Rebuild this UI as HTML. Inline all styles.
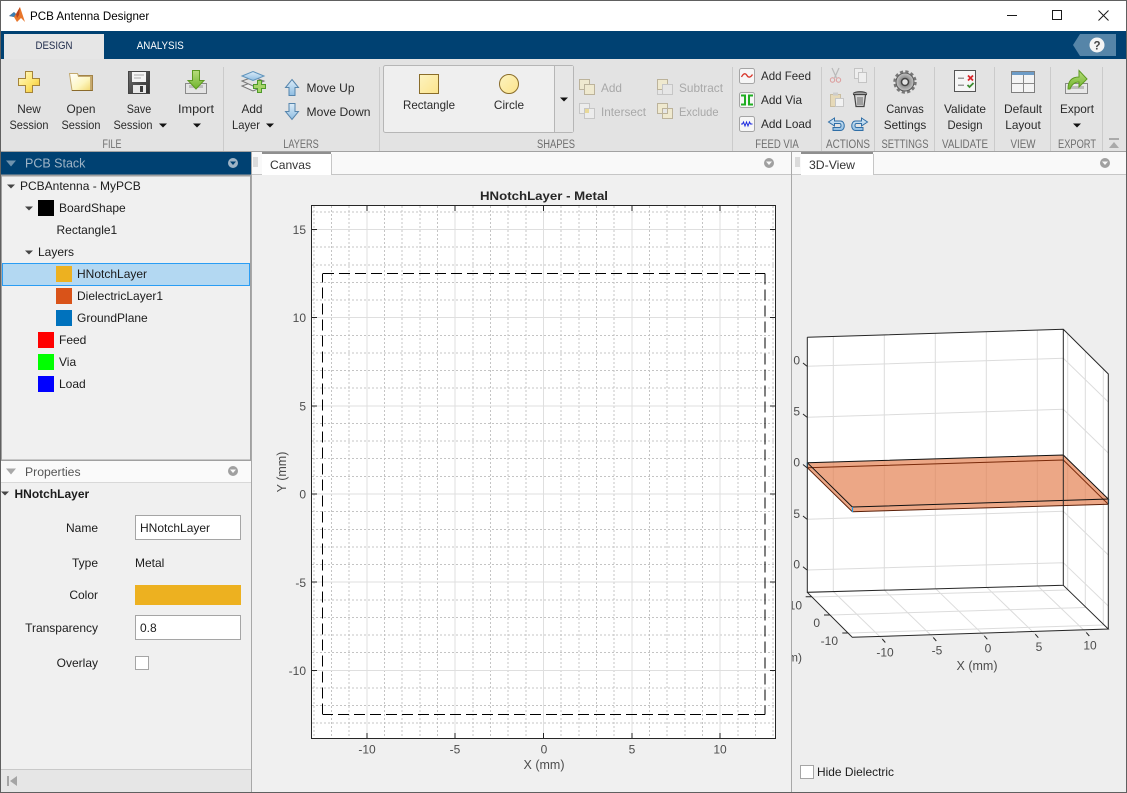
<!DOCTYPE html>
<html><head><meta charset="utf-8"><title>PCB Antenna Designer</title>
<style>
html,body{margin:0;padding:0;width:1127px;height:793px;overflow:hidden;background:#f0f0f0}
svg{display:block}
text{font-family:"Liberation Sans",Arial,sans-serif;font-size:12px;fill:#1c1c1c}
.r{font-size:11.8px;fill:#2a2a2a;text-anchor:middle}
.rl{font-size:11.8px;fill:#2a2a2a}
.d{font-size:11.8px;fill:#a8a8a8}
.s{font-size:11.5px;fill:#6e6e6e;text-anchor:middle}
.e{text-anchor:end}
.m{text-anchor:middle}
.t{fill:#4d4d4d;text-anchor:middle}
.c{shape-rendering:crispEdges}
</style></head><body>
<svg width="1127" height="793" viewBox="0 0 1127 793" xmlns="http://www.w3.org/2000/svg">
<defs>
<linearGradient id="gold" x1="0" y1="0" x2="1" y2="1"><stop offset="0" stop-color="#fffbd0"/><stop offset=".6" stop-color="#fde36a"/><stop offset="1" stop-color="#efbe2e"/></linearGradient>
<linearGradient id="fold" x1="0" y1="0" x2="1" y2="1"><stop offset="0" stop-color="#ffffff"/><stop offset=".6" stop-color="#fdf6c0"/><stop offset="1" stop-color="#f2d870"/></linearGradient>
<linearGradient id="shape" x1="0" y1="0" x2="1" y2="1"><stop offset="0" stop-color="#fdf3c0"/><stop offset="1" stop-color="#fbe48c"/></linearGradient>
<linearGradient id="green" x1="0" y1="0" x2="0" y2="1"><stop offset="0" stop-color="#b8dc7c"/><stop offset="1" stop-color="#6fb52c"/></linearGradient>
<linearGradient id="blue" x1="0" y1="0" x2="0" y2="1"><stop offset="0" stop-color="#dcecf8"/><stop offset="1" stop-color="#8fbde2"/></linearGradient>
<linearGradient id="floppy" x1="0" y1="0" x2="1" y2="1"><stop offset="0" stop-color="#6e6e6e"/><stop offset="1" stop-color="#2e2e2e"/></linearGradient>
<radialGradient id="gear"><stop offset="0" stop-color="#555"/><stop offset=".4" stop-color="#888"/><stop offset="1" stop-color="#c4c4c4"/></radialGradient>
<clipPath id="rp"><rect x="792" y="176" width="334" height="616"/></clipPath>
</defs>

<!-- window chrome -->
<rect width="1127" height="793" fill="#f0f0f0"/>
<rect x="0" y="0" width="1127" height="31" fill="#fff"/>
<rect x="0" y="0" width="1127" height="1" fill="#606060"/>
<path d="M9 16 L14 12 L16 14 L20 7 L25 22 L21 18 L17 22 L14 17 Z" fill="#e8762b"/>
<path d="M9 16 L14 12 L16 14 L14 17 Z" fill="#3a7fb5"/>
<path d="M16 14 L20 7 L19 15 L17 18 Z" fill="#b9431b"/>
<text x="30" y="20" style="font-size:11.6px;fill:#000">PCB Antenna Designer</text>
<g fill="none" stroke="#1a1a1a" stroke-width="1" class="c">
<path d="M1007 15.5H1017"/><rect x="1052.5" y="10.5" width="9" height="9"/></g>
<path d="M1098.5 10.5L1108.5 20.5M1108.5 10.5L1098.5 20.5" stroke="#1a1a1a" fill="none"/>

<rect x="0" y="31" width="1127" height="28" fill="#004172"/>
<rect x="4" y="34" width="100" height="25" fill="#e6e6e6"/>
<text x="54" y="49" class="m" style="font-size:11px;fill:#1e2a4a" textLength="37" lengthAdjust="spacingAndGlyphs">DESIGN</text>
<text x="160.300" y="49" class="m" style="font-size:11px;fill:#fff" textLength="47" lengthAdjust="spacingAndGlyphs">ANALYSIS</text>
<path d="M1080 34H1116V56H1080L1073 45Z" fill="#5685a8"/>
<circle cx="1097" cy="45" r="7.5" fill="#f4f4f4"/>
<text x="1097" y="49.5" class="m" style="font-size:11.5px;font-weight:bold;fill:#444">?</text>

<!-- ribbon -->
<rect x="0" y="59" width="1127" height="92" fill="#e3e3e3"/>
<rect x="0" y="151" width="1127" height="1" fill="#a2a2a2"/>
<path class="c" d="M223.5 67V151M379.5 67V151M732.5 67V151M821.5 67V151M874.5 67V151M934.5 67V151M994.5 67V151M1050.5 67V151M1102.5 67V151" stroke="#cbcbcb"/>

<!-- New -->
<path d="M25.5 71.5H32.5V78.5H39.5V85.5H32.5V92.5H25.5V85.5H18.5V78.5H25.5Z" fill="url(#gold)" stroke="#a5843a"/>
<!-- Open -->
<path d="M71 74.5H77L79 75.5H92.5V90.5H76Z" fill="#c8a86c" stroke="#a28348"/>
<path d="M69.5 73.5H77.5L78.5 76.5H90.5V90.5H72Z" fill="url(#fold)" stroke="#c4ab70"/>
<path d="M72 90.5H92.5" stroke="#8a6a2c"/>
<!-- Save -->
<path d="M128.5 71.5H149.5V93.5H128.5Z" fill="url(#floppy)" stroke="#444"/>
<rect x="132" y="72" width="14" height="10" fill="#f4f4f4"/>
<path class="c" d="M134 75H144M134 78H141" stroke="#aaa"/>
<rect x="133" y="85" width="13" height="8" fill="#e8e8e8"/><rect x="140" y="86" width="3" height="6" fill="#3a3a3a"/>
<!-- Import -->
<path d="M185.5 83.5H206.5V93.5H185.5Z" fill="#e4e4e4" stroke="#8a8a8a"/>
<rect x="189" y="85" width="14" height="3" fill="#bdbdbd"/>
<path d="M192.5 70.5H199.5V80.5H204L196 89 188 80.5H192.5Z" fill="url(#green)" stroke="#5e9a22"/>
<!-- Add layer -->
<path d="M242 86L253 82L264 86L253 91Z" fill="#eee" stroke="#777"/>
<path d="M242 81L253 77L264 81L253 86Z" fill="#e2e2e2" stroke="#777"/>
<path d="M242 76L253 71.5L264 76L253 80.5Z" fill="url(#blue)" stroke="#5f93bb"/>
<path d="M257.5 80.5H261.5V84.5H265.5V88.5H261.5V92.5H257.5V88.5H253.5V84.5H257.5Z" fill="#a6d468" stroke="#4f9a2c"/>
<!-- Move -->
<path d="M292 79.5L298.5 87.5H295V95.5H289V87.5H285.5Z" fill="url(#blue)" stroke="#5685ac"/>
<path d="M289 103.5H295V111.5H298.5L292 119.5L285.5 111.5H289Z" fill="url(#blue)" stroke="#5685ac"/>

<text x="29" y="113" class="r">New</text><text x="29" y="129" class="r" textLength="39" lengthAdjust="spacingAndGlyphs">Session</text>
<text x="81" y="113" class="r" textLength="29" lengthAdjust="spacingAndGlyphs">Open</text><text x="81" y="129" class="r" textLength="39" lengthAdjust="spacingAndGlyphs">Session</text>
<text x="139" y="113" class="r" textLength="24.500" lengthAdjust="spacingAndGlyphs">Save</text><text x="133" y="129" class="r" textLength="39" lengthAdjust="spacingAndGlyphs">Session</text>
<path d="M159 123.5h8l-4 4z" fill="#111"/>
<text x="196" y="113" class="r" textLength="36" lengthAdjust="spacingAndGlyphs">Import</text>
<path d="M193 123.5h8l-4 4z" fill="#111"/>
<text x="252" y="113" class="r">Add</text><text x="246" y="129" class="r" textLength="28" lengthAdjust="spacingAndGlyphs">Layer</text>
<path d="M266 123.5h8l-4 4z" fill="#111"/>
<text x="306.500" y="92" class="rl" textLength="48" lengthAdjust="spacingAndGlyphs">Move Up</text>
<text x="306.500" y="116" class="rl" textLength="64" lengthAdjust="spacingAndGlyphs">Move Down</text>

<text x="112" y="148" class="s" textLength="19" lengthAdjust="spacingAndGlyphs">FILE</text>
<text x="301" y="148" class="s" textLength="35.500" lengthAdjust="spacingAndGlyphs">LAYERS</text>
<text x="556" y="148" class="s" textLength="38" lengthAdjust="spacingAndGlyphs">SHAPES</text>
<text x="777" y="148" class="s" textLength="43.500" lengthAdjust="spacingAndGlyphs">FEED VIA</text>
<text x="848" y="148" class="s" textLength="44" lengthAdjust="spacingAndGlyphs">ACTIONS</text>
<text x="905" y="148" class="s" textLength="47" lengthAdjust="spacingAndGlyphs">SETTINGS</text>
<text x="965" y="148" class="s" textLength="46" lengthAdjust="spacingAndGlyphs">VALIDATE</text>
<text x="1023" y="148" class="s" textLength="25" lengthAdjust="spacingAndGlyphs">VIEW</text>
<text x="1077" y="148" class="s" textLength="38" lengthAdjust="spacingAndGlyphs">EXPORT</text>

<!-- Shapes gallery -->
<rect x="383.5" y="65.5" width="190" height="67" rx="2" fill="#efefef" stroke="#b6b6b6"/>
<rect x="555" y="66" width="18" height="66" fill="#e6e6e6"/>
<path class="c" d="M554.5 66V132" stroke="#b6b6b6"/>
<rect x="419.5" y="74.5" width="19" height="19" fill="url(#shape)" stroke="#8a6d2a"/>
<circle cx="509" cy="84" r="9.5" fill="url(#shape)" stroke="#8a6d2a"/>
<text x="429" y="109" class="r" textLength="52" lengthAdjust="spacingAndGlyphs">Rectangle</text>
<text x="509" y="109" class="r">Circle</text>
<path d="M560 97.5h8l-4 4z" fill="#111"/>

<!-- disabled -->
<g stroke="#bcb39b">
<rect x="579.5" y="79.5" width="10" height="10" fill="#efe9cf"/><rect x="584.5" y="84.5" width="10" height="10" fill="#efe9cf"/>
<rect x="579.5" y="103.5" width="10" height="10" fill="#ececec" stroke="#c6c6c6"/><rect x="584.5" y="108.5" width="10" height="10" fill="#ececec" stroke="#c6c6c6"/><rect x="585" y="109" width="4" height="4" fill="#e8d99a" stroke="none"/>
<rect x="657.5" y="84.5" width="10" height="10" fill="#e6e6e6" stroke="#c6c6c6"/><rect x="657.5" y="79.5" width="10" height="10" fill="#efe9cf"/><rect x="662.5" y="84.5" width="10" height="10" fill="#e6e6e6" stroke="#c6c6c6"/>
<rect x="657.5" y="103.5" width="10" height="10" fill="#efe9cf"/><rect x="662.5" y="108.5" width="10" height="10" fill="#efe9cf"/><rect x="662.5" y="108.5" width="5" height="5" fill="#e6e6e6"/>
</g>
<text x="601" y="92" class="d" textLength="21" lengthAdjust="spacingAndGlyphs">Add</text>
<text x="601" y="116" class="d" textLength="45" lengthAdjust="spacingAndGlyphs">Intersect</text>
<text x="679" y="92" class="d" textLength="44" lengthAdjust="spacingAndGlyphs">Subtract</text>
<text x="679" y="116" class="d" textLength="39.500" lengthAdjust="spacingAndGlyphs">Exclude</text>

<!-- Feed via -->
<rect x="739.5" y="68.5" width="15" height="15" rx="2" fill="#f6f6f6" stroke="#a5a5a5"/>
<path d="M741.5 77c2-4 4-4 5.5-1.5s3.500 2 5.500-1" fill="none" stroke="#d8352a" stroke-width="1.300"/>
<rect x="739.500" y="92.500" width="15" height="15" rx="2" fill="#f6f6f6" stroke="#a5a5a5"/>
<path d="M741 95.500h4v9h-4M753 95.500h-4v9h4" fill="none" stroke="#1fae22" stroke-width="2"/>
<rect x="739.500" y="116.500" width="15" height="15" rx="2" fill="#f6f6f6" stroke="#a5a5a5"/>
<path d="M741 124h1.500l1-2 1.500 4 1.500-4 1.500 4 1.500-4 1 2h2" fill="none" stroke="#1d2be0"/>
<text x="761" y="80" class="rl" textLength="50" lengthAdjust="spacingAndGlyphs">Add Feed</text>
<text x="761" y="104" class="rl">Add Via</text>
<text x="761" y="128" class="rl" textLength="50.500" lengthAdjust="spacingAndGlyphs">Add Load</text>

<!-- Actions -->
<path d="M839 68L834.500 78M832 68L836.500 78" stroke="#b9b9b9" stroke-width="1.200" fill="none"/>
<circle cx="832.500" cy="80" r="2.200" fill="none" stroke="#dc9a9a"/><circle cx="838.500" cy="80" r="2.200" fill="none" stroke="#dc9a9a"/>
<rect x="854.500" y="68.500" width="8" height="10" fill="#eee" stroke="#c4c4c4"/><rect x="858.500" y="72.500" width="8" height="10" fill="#eee" stroke="#c4c4c4"/>
<rect x="830.500" y="94.500" width="10" height="12" fill="#e6d9b8" stroke="#c9bda0"/><rect x="833" y="92.500" width="5" height="3" fill="#ccc"/><rect x="835.500" y="98.500" width="8" height="8" fill="#f2f2f2" stroke="#c6c6c6"/>
<path d="M853 94.500h14M854.500 95l1.500 11.500h8l1.500-11.500" fill="#d6d6d6" stroke="#444" stroke-width="1.200"/>
<path d="M853 93.500c3-2.500 11-2.500 14 0" fill="#888" stroke="#444"/>
<path d="M858 97v8M860 97v8M862 97v8" stroke="#666"/>
<path d="M834.500 118l-6 4 6 4v-2.500h5c2 0 2 4 0 4h-6.500v3h7.500c5 0 5-9.500 0-9.500h-6z" fill="url(#blue)" stroke="#2f6ea6"/>
<path d="M861.500 118l6 4-6 4v-2.500h-5c-2 0-2 4 0 4h6.500v3h-7.500c-5 0-5-9.500 0-9.500h6z" fill="url(#blue)" stroke="#2f6ea6"/>

<!-- Settings -->
<circle cx="905" cy="82" r="9" fill="url(#gear)" stroke="#555" stroke-width="1"/>
<circle cx="905" cy="82" r="10.500" fill="none" stroke="#777" stroke-width="2.400" stroke-dasharray="3.200 2.300"/>
<circle cx="905" cy="82" r="3.500" fill="#e3e3e3" stroke="#444" stroke-width="1.500"/>
<text x="905" y="113" class="r" textLength="37.500" lengthAdjust="spacingAndGlyphs">Canvas</text><text x="905" y="129" class="r" textLength="42.500" lengthAdjust="spacingAndGlyphs">Settings</text>
<!-- Validate -->
<rect x="954.500" y="70.500" width="21" height="21" fill="#f6f6f6" stroke="#555"/>
<path class="c" d="M958 78h6M958 85h6" stroke="#999" stroke-width="1.500"/>
<path d="M968 75.500l5 5M973 75.500l-5 5" stroke="#d8262c" stroke-width="1.800"/>
<path d="M967.500 85l2 2 4-4" fill="none" stroke="#3d8c30" stroke-width="1.800"/>
<text x="965" y="113" class="r" textLength="42" lengthAdjust="spacingAndGlyphs">Validate</text><text x="965" y="129" class="r" textLength="35" lengthAdjust="spacingAndGlyphs">Design</text>
<!-- Layout -->
<rect x="1011.500" y="71.500" width="23" height="21" fill="#f4f4f4" stroke="#7f7f7f"/>
<rect x="1012" y="72" width="22" height="3" fill="#6d9cc7"/>
<path class="c" d="M1023.500 75V92M1012 83.500H1034" stroke="#8a8a8a"/>
<text x="1023" y="113" class="r" textLength="38" lengthAdjust="spacingAndGlyphs">Default</text><text x="1023" y="129" class="r" textLength="35.500" lengthAdjust="spacingAndGlyphs">Layout</text>
<!-- Export -->
<path d="M1065.500 83.500H1087.500V93.500H1065.500Z" fill="#e8e8e8" stroke="#8a8a8a"/>
<rect x="1069" y="86" width="15" height="3" fill="#bdbdbd"/>
<path d="M1068 89c0-8 4-12 11-12v-6.500l8 8.500-8 8v-5c-4 0-7 2-9 7z" fill="url(#green)" stroke="#5e9a22"/>
<text x="1077" y="113" class="r" textLength="34" lengthAdjust="spacingAndGlyphs">Export</text>
<path d="M1073 123.500h8l-4 4z" fill="#111"/>
<!-- collapse -->
<rect class="c" x="1109" y="138" width="10" height="2" fill="#aaa"/>
<path d="M1109 148l5-6 5 6z" fill="#aaa"/>

<!-- left panel -->
<rect x="0" y="152" width="252" height="23" fill="#004172"/>
<path d="M6 160.500h10l-5 6z" fill="#6f93ae"/>
<text x="25" y="167.500" style="font-size:12.500px;fill:#9fb4c6">PCB Stack</text>
<circle cx="233" cy="163" r="5" fill="#9fb4c6"/><path d="M230 161.500h6l-3 3.500z" fill="#004172"/>
<rect x="1" y="175.500" width="250" height="285" fill="#f0f0f0" stroke="#a0a0a0" stroke-width="2"/>
<rect x="2.500" y="263.500" width="247" height="22" fill="#b3d8f2" stroke="#2a9df4" class="c"/>

<path d="M7 184.500h8l-4 4z" fill="#444"/><path d="M25 206.500h8l-4 4z" fill="#444"/><path d="M25 250.500h8l-4 4z" fill="#444"/>
<g class="c">
<rect x="38" y="200" width="16" height="16" fill="#000"/>
<rect x="56" y="266" width="16" height="16" fill="#edb120"/>
<rect x="56" y="288" width="16" height="16" fill="#d95319"/>
<rect x="56" y="310" width="16" height="16" fill="#0072bd"/>
<rect x="38" y="332" width="16" height="16" fill="#f00"/>
<rect x="38" y="354" width="16" height="16" fill="#0f0"/>
<rect x="38" y="376" width="16" height="16" fill="#00f"/>
</g>
<text x="20" y="190">PCBAntenna - MyPCB</text>
<text x="59" y="212">BoardShape</text>
<text x="56.500" y="234">Rectangle1</text>
<text x="38" y="256">Layers</text>
<text x="77" y="278">HNotchLayer</text>
<text x="77" y="300">DielectricLayer1</text>
<text x="77" y="322">GroundPlane</text>
<text x="59" y="344">Feed</text>
<text x="59" y="366">Via</text>
<text x="59" y="388">Load</text>

<rect x="1" y="461" width="250" height="21" fill="#fafafa"/>
<rect x="1" y="482" width="250" height="1" fill="#d8d8d8"/>
<path d="M6 468.500h10l-5 6z" fill="#a8a8a8"/>
<text x="25" y="476" style="fill:#555;font-size:12.200px">Properties</text>
<circle cx="233" cy="471" r="5" fill="#a0a0a0"/><path d="M230 469.500h6l-3 3.500z" fill="#fafafa"/>
<path d="M1 491.500h8l-4 4z" fill="#444"/>
<text x="14.500" y="498" style="font-weight:bold">HNotchLayer</text>
<text x="98" y="532" class="e">Name</text>
<rect x="135.500" y="515.500" width="105" height="24" fill="#fff" stroke="#a5a5a5" class="c"/>
<text x="140" y="532">HNotchLayer</text>
<text x="98" y="567" class="e">Type</text>
<text x="135" y="567">Metal</text>
<text x="98" y="599" class="e">Color</text>
<rect x="135" y="585" width="106" height="20" fill="#edb120"/>
<text x="98" y="632" class="e">Transparency</text>
<rect x="135.500" y="615.500" width="105" height="24" fill="#fff" stroke="#a5a5a5" class="c"/>
<text x="140" y="632">0.8</text>
<text x="98" y="667" class="e">Overlay</text>
<rect x="135.500" y="656.500" width="13" height="13" fill="#fff" stroke="#a5a5a5" class="c"/>
<rect x="1" y="769" width="250" height="1" fill="#c9c9c9"/>
<rect x="1" y="770" width="250" height="22" fill="#e6e6e6"/>
<rect x="7" y="776" width="2" height="10" fill="#a5a5a5"/><path d="M17 776v10l-7-5z" fill="#a5a5a5"/>
<rect x="251" y="152" width="1" height="641" fill="#a8a8a8"/>

<!-- canvas -->
<rect x="252" y="152" width="539" height="23" fill="#f9f9f9"/>
<rect x="252" y="174" width="539" height="1" fill="#c6c6c6"/>
<path class="c" d="M253 158h5M253 160h5M253 162h5M253 164h5M253 166h5" stroke="#bdbdbd"/>
<rect x="262" y="152" width="69" height="23" fill="#fff"/>
<rect x="262" y="152" width="69" height="2" fill="#8f8f8f"/>
<rect x="331" y="154" width="1" height="21" fill="#c6c6c6"/>
<text x="270" y="169" style="fill:#333" textLength="41" lengthAdjust="spacingAndGlyphs">Canvas</text>
<circle cx="769" cy="163" r="5" fill="#a0a0a0"/><path d="M766 161.500h6l-3 3.500z" fill="#f9f9f9"/>

<text x="544" y="200" class="m" style="font-weight:bold;fill:#262626" textLength="128" lengthAdjust="spacingAndGlyphs">HNotchLayer - Metal</text>
<rect x="311" y="205" width="464" height="533" fill="#fff"/>
<g class="c" fill="none">
<path stroke="#c4c4c4" stroke-dasharray="2 2" d="M313.800 206V738M331.500 206V738M349.100 206V738M384.500 206V738M402.100 206V738M419.800 206V738M437.500 206V738M472.800 206V738M490.500 206V738M508.200 206V738M525.800 206V738M561.200 206V738M578.800 206V738M596.500 206V738M614.200 206V738M649.500 206V738M667.200 206V738M684.900 206V738M702.500 206V738M737.900 206V738M755.500 206V738M773.200 206V738"/>
<path stroke="#c4c4c4" stroke-dasharray="2 2" d="M312 211.900H775M312 247.200H775M312 264.800H775M312 282.400H775M312 300.100H775M312 335.300H775M312 353H775M312 370.600H775M312 388.200H775M312 423.500H775M312 441.100H775M312 458.700H775M312 476.400H775M312 511.600H775M312 529.300H775M312 546.900H775M312 564.500H775M312 599.800H775M312 617.400H775M312 635H775M312 652.700H775M312 687.900H775M312 705.600H775M312 723.200H775"/>
<path stroke="#dfdfdf" d="M366.800 206V738M455.200 206V738M543.500 206V738M631.900 206V738M720.200 206V738M312 229.600H775M312 317.700H775M312 405.900H775M312 494H775M312 582.200H775M312 670.300H775"/>
<path stroke="#000" stroke-dasharray="11 5" d="M323 273.500H765"/>
<path stroke="#000" stroke-dasharray="11 5" d="M765 273.500V714.500"/>
<path stroke="#000" stroke-dasharray="11 5" d="M765 714.500H323"/>
<path stroke="#000" stroke-dasharray="11 5" d="M322.500 714.500V273.500"/>
<path stroke="#262626" d="M366.800 206v5M455.200 206v5M543.500 206v5M631.900 206v5M720.200 206v5M366.800 738v-5M455.200 738v-5M543.500 738v-5M631.900 738v-5M720.200 738v-5M312 229.600h5M312 317.700h5M312 405.900h5M312 494h5M312 582.200h5M312 670.300h5M775 229.600h-5M775 317.700h-5M775 405.900h-5M775 494h-5M775 582.200h-5M775 670.300h-5"/>
<rect x="311.500" y="205.500" width="464" height="533" stroke="#262626"/>
</g>
<text x="306" y="234" class="e" style="fill:#4d4d4d">15</text>
<text x="306" y="322" class="e" style="fill:#4d4d4d">10</text>
<text x="306" y="410.500" class="e" style="fill:#4d4d4d">5</text>
<text x="306" y="498.500" class="e" style="fill:#4d4d4d">0</text>
<text x="306" y="587" class="e" style="fill:#4d4d4d">-5</text>
<text x="306" y="675" class="e" style="fill:#4d4d4d">-10</text>
<text x="367" y="753.500" class="t">-10</text>
<text x="455" y="753.500" class="t">-5</text>
<text x="544" y="753.500" class="t">0</text>
<text x="632" y="753.500" class="t">5</text>
<text x="720" y="753.500" class="t">10</text>
<text x="544" y="769" class="t" style="font-size:12.500px">X (mm)</text>
<text transform="translate(286 472) rotate(-90)" class="t" style="font-size:12.500px">Y (mm)</text>

<!-- 3D panel -->
<rect x="791" y="152" width="1" height="641" fill="#a8a8a8"/>
<rect x="792" y="152" width="334" height="23" fill="#f9f9f9"/>
<rect x="792" y="175" width="334" height="618" fill="#eeeeee"/>
<rect x="792" y="174" width="334" height="1" fill="#c6c6c6"/>
<path class="c" d="M795 158h5M795 160h5M795 162h5M795 164h5M795 166h5" stroke="#bdbdbd"/>
<rect x="801" y="152" width="72" height="23" fill="#fff"/>
<rect x="801" y="152" width="72" height="2" fill="#8f8f8f"/>
<rect x="873" y="154" width="1" height="21" fill="#c6c6c6"/>
<text x="809" y="169" style="fill:#333" textLength="46" lengthAdjust="spacingAndGlyphs">3D-View</text>
<circle cx="1105" cy="163" r="5" fill="#a0a0a0"/><path d="M1102 161.500h6l-3 3.500z" fill="#f9f9f9"/>

<!-- 3D box -->
<path d="M807.300 337.300L1063.300 329.300L1108.300 374V629L852.300 637.300L807.300 592.300Z" fill="#fff"/>
<g fill="none" stroke="#dcdcdc">
<path d="M833.300 336.500V591.500M884.300 335V590M935.300 333.300V588.300M986.300 331.800V586.800M1037.300 330V585.500"/>
<path d="M1067.700 333.500V589.500M1085.300 351.500V607M1103.300 369V624.500"/>
<path d="M807.300 366.300L1063.300 358.300L1108.300 402M807.300 417.300L1063.300 409.300L1108.300 453M807.300 467.700L1063.300 460L1108.300 504M807.300 519.300L1063.300 511.300L1108.300 555M807.300 570L1063.300 562.700L1108.300 606"/>
<path d="M833.300 591.500L882.300 639M884.300 590L933.300 637.500M935.300 588.300L984.300 635.800M986.300 586.800L1035.300 634.200M1037.300 585.500L1086.300 632.500"/>
<path d="M811.700 597L1067.700 590M830 615L1086 607.500M848.300 633L1104.300 625"/>
</g>
<!-- plane -->
<path d="M807.300 462.700L1063.300 455L1108.300 499V504.300L852.300 511.700L807.300 467.700Z" fill="#e37e4c" fill-opacity=".68"/>
<path d="M807.300 467.700L1063.300 460L1108.300 504.300" fill="none" stroke="#7a2a0a" stroke-width="1"/>
<path d="M807.300 462.700L1063.300 455L1108.300 499L852.300 507L807.300 462.700" fill="none" stroke="#111" stroke-width="1"/>
<path d="M852.300 511.700L1108.300 504.300M807.300 467.700L852.300 511.700" fill="none" stroke="#5a1f08" stroke-width="1"/>
<path d="M807.300 462.500v5M852.500 507v5M1108.500 499v5" stroke="#1e9be8" stroke-width="1.200"/>
<!-- edges -->
<g fill="none" stroke="#262626">
<path d="M807.300 337.300L1063.300 329.300L1108.300 374V629M807.300 337.300V592.300L1063.300 585.300V329.300"/>
<path d="M807.300 592.300L852.300 637.300L1108.300 629L1063.300 585.300"/>
<path d="M803 363l4 3.300M803 414l4 3.300M803 464.500l4 3.300M803 516l4 3.300M803 566.700l4 3.300"/>
<path d="M882.300 639l3 3.500M933.300 637.500l3 3.500M984.300 635.800l3 3.500M1035.300 634.200l3 3.500M1086.300 632.500l3 3.500"/>
<path d="M811.700 596.700l-6 0M830 615l-6 0M848.300 633l-6 0"/>
</g>
<g clip-path="url(#rp)">
<text x="800" y="364.500" class="e" style="fill:#4d4d4d">0</text>
<text x="800" y="415.500" class="e" style="fill:#4d4d4d">5</text>
<text x="800" y="466.500" class="e" style="fill:#4d4d4d">0</text>
<text x="800" y="518" class="e" style="fill:#4d4d4d">5</text>
<text x="800" y="568.500" class="e" style="fill:#4d4d4d">0</text>
<text x="802" y="609.500" class="e" style="fill:#4d4d4d">10</text>
<text x="820" y="627" class="e" style="fill:#4d4d4d">0</text>
<text x="838" y="645" class="e" style="fill:#4d4d4d">-10</text>
<text x="802" y="661.500" class="e" style="fill:#4d4d4d">(mm)</text>
</g>
<text x="885" y="656.500" class="t">-10</text>
<text x="937" y="654.500" class="t">-5</text>
<text x="988" y="652.500" class="t">0</text>
<text x="1039" y="651" class="t">5</text>
<text x="1090" y="649.500" class="t">10</text>
<text x="977" y="670" class="t" style="font-size:12.500px">X (mm)</text>
<rect x="800.500" y="765.500" width="13" height="13" fill="#fff" stroke="#a5a5a5" class="c"/>
<text x="817" y="776" textLength="77" lengthAdjust="spacingAndGlyphs">Hide Dielectric</text>

<!-- outer border -->
<rect x="0" y="0" width="1" height="793" fill="#606060"/>
<rect x="1126" y="0" width="1" height="793" fill="#606060"/>
<rect x="0" y="792" width="1127" height="1" fill="#606060"/>
</svg>
</body></html>
